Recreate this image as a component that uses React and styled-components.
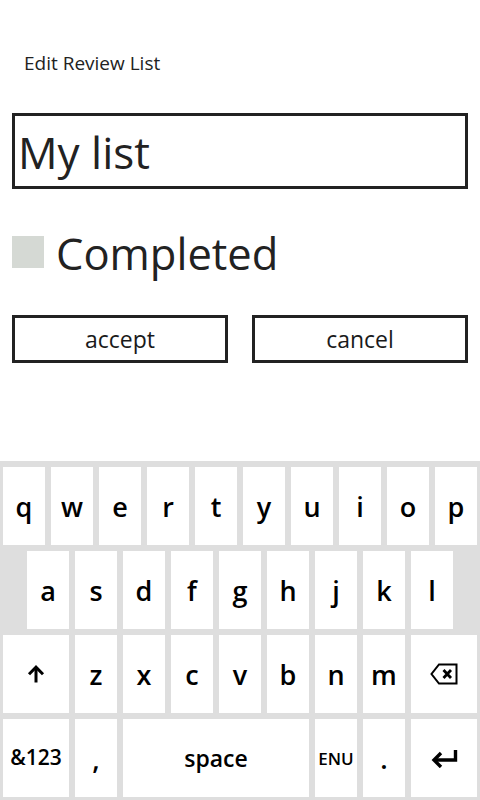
import React, { useState } from "react";
import styled, { createGlobalStyle } from "styled-components";

const GlobalStyle = createGlobalStyle`
  html, body {
    margin: 0;
    padding: 0;
    background: #ffffff;
  }
  * {
    box-sizing: border-box;
  }
`;

const Page = styled.div`
  width: 480px;
  height: 800px;
  display: flex;
  flex-direction: column;
  background: #ffffff;
  font-family: "Open Sans", "Noto Sans", sans-serif;
  color: #222222;
  overflow: hidden;
`;

const Form = styled.div`
  display: flex;
  flex-direction: column;
  padding: 50px 12px 0 12px;
`;

const Title = styled.div`
  font-size: 19px;
  line-height: 26px;
  height: 26px;
  padding-left: 12px;
  color: #222222;
`;

const TextBox = styled.input`
  margin-top: 37px;
  height: 76px;
  width: 100%;
  border: 3px solid #222222;
  border-radius: 0;
  padding: 2px 0 0 3px;
  font-family: inherit;
  font-size: 44px;
  line-height: 70px;
  color: #222222;
  background: #ffffff;
  outline: none;
`;

const CheckRow = styled.label`
  margin-top: 47px;
  display: flex;
  align-items: flex-start;
  gap: 12px;
  height: 40px;
  cursor: pointer;
`;

const CheckBox = styled.span`
  width: 32px;
  height: 32px;
  flex: none;
  background: ${(p) => (p.$checked ? "#222222" : "#d5d9d4")};
`;

const CheckText = styled.span`
  font-size: 43.5px;
  line-height: 36px;
  color: #222222;
`;

const ButtonRow = styled.div`
  margin-top: 39px;
  display: flex;
  gap: 24px;
`;

const Button = styled.button`
  flex: 1;
  height: 48px;
  border: 3px solid #222222;
  border-radius: 0;
  background: #ffffff;
  font-family: inherit;
  font-size: 23px;
  line-height: 40px;
  color: #1a1a1a;
  padding: 0;
  cursor: pointer;
`;

const Keyboard = styled.div`
  margin-top: auto;
  height: 339px;
  background: #dedede;
  padding: 6px 3px 3px 3px;
  display: flex;
  flex-direction: column;
  gap: 6px;
`;

const KeyRow = styled.div`
  display: flex;
  gap: 6px;
  padding-left: ${(p) => p.$indent || 0}px;
`;

const Key = styled.div`
  width: ${(p) => p.$w || 42}px;
  height: 78px;
  flex: none;
  background: #ffffff;
  display: flex;
  align-items: center;
  justify-content: center;
  font-family: "Open Sans", "Noto Sans", sans-serif;
  font-weight: 600;
  font-size: ${(p) => p.$fs || 27}px;
  color: #000000;
  padding-bottom: ${(p) => p.$pb || 0}px;
`;

const ShiftIcon = () => (
  <svg width="18" height="18" viewBox="0 0 18 18">
    <path d="M9 3 V17.5" stroke="#000" strokeWidth="3" fill="none" />
    <path d="M2 9.2 L9 2.2 L16 9.2" stroke="#000" strokeWidth="3" fill="none" />
  </svg>
);

const BackIcon = () => (
  <svg width="28" height="22" viewBox="0 0 28 22">
    <path d="M9 1.5 H26.5 V20.5 H9 L1.5 11 Z" stroke="#000" strokeWidth="2" fill="none" strokeLinejoin="miter" />
    <path d="M13.5 7 L21 15 M21 7 L13.5 15" stroke="#000" strokeWidth="2.8" fill="none" />
  </svg>
);

const EnterIcon = () => (
  <svg width="27" height="19" viewBox="0 0 27 19">
    <path d="M24.5 1 V11 H4" stroke="#000" strokeWidth="3.4" fill="none" />
    <path d="M10 4 L3 11 L10 18" stroke="#000" strokeWidth="3.4" fill="none" />
  </svg>
);

const row1 = ["q", "w", "e", "r", "t", "y", "u", "i", "o", "p"];
const row2 = ["a", "s", "d", "f", "g", "h", "j", "k", "l"];
const row3 = ["z", "x", "c", "v", "b", "n", "m"];

export default function App() {
  const [name, setName] = useState("My list");
  const [done, setDone] = useState(false);

  return (
    <Page>
      <GlobalStyle />
      <Form>
        <Title>Edit Review List</Title>
        <TextBox value={name} onChange={(e) => setName(e.target.value)} />
        <CheckRow onClick={() => setDone(!done)}>
          <CheckBox $checked={done} />
          <CheckText>Completed</CheckText>
        </CheckRow>
        <ButtonRow>
          <Button>accept</Button>
          <Button>cancel</Button>
        </ButtonRow>
      </Form>
      <Keyboard>
        <KeyRow>
          {row1.map((k) => (
            <Key key={k}>{k}</Key>
          ))}
        </KeyRow>
        <KeyRow $indent={24}>
          {row2.map((k) => (
            <Key key={k}>{k}</Key>
          ))}
        </KeyRow>
        <KeyRow>
          <Key $w={66}>
            <ShiftIcon />
          </Key>
          {row3.map((k) => (
            <Key key={k}>{k}</Key>
          ))}
          <Key $w={66}>
            <BackIcon />
          </Key>
        </KeyRow>
        <KeyRow>
          <Key $w={66} $fs={21} $pb={2}>&amp;123</Key>
          <Key>,</Key>
          <Key $w={186} $fs={23}>space</Key>
          <Key $fs={17}>ENU</Key>
          <Key>.</Key>
          <Key $w={66}>
            <EnterIcon />
          </Key>
        </KeyRow>
      </Keyboard>
    </Page>
  );
}
